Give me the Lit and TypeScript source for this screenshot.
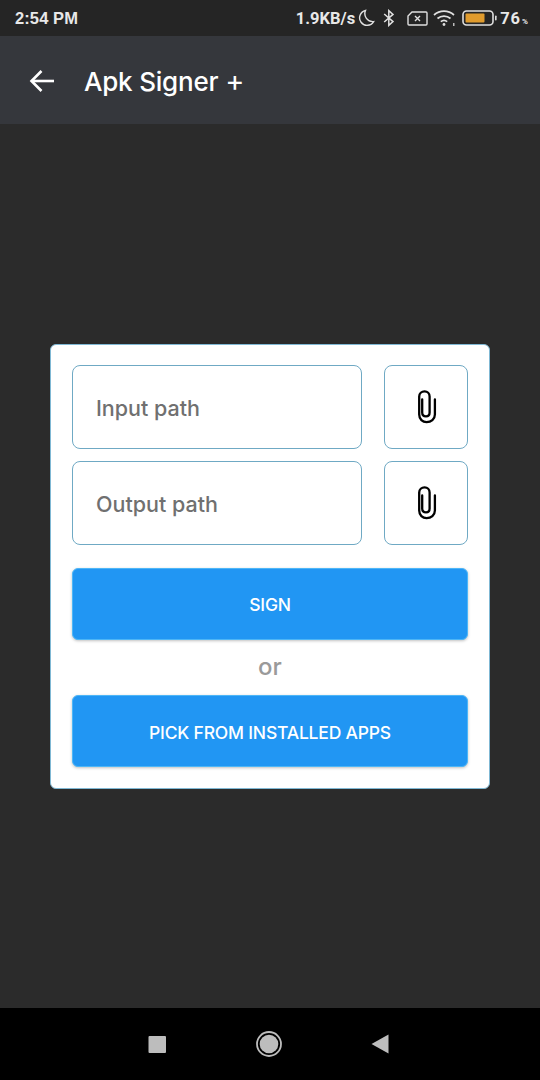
import { LitElement, html, css } from "lit";
import { customElement } from "lit/decorators.js";

const clip = html`<svg class="clip" width="22" height="34" viewBox="0 0 22 34" fill="none" stroke="#000" stroke-width="2.3" stroke-linecap="round" stroke-linejoin="round"><path d="M6.2 9.5 V22.5 C6.2 25 8 26.4 10 26.4 C12 26.4 13.6 25 13.6 22.5 V6.5 C13.6 3.4 11.4 1.4 8.6 1.4 C5.6 1.4 3.2 3.4 3.2 6.5 V24.6 C3.2 29.2 6.6 32.2 10.6 32.2 C15 32.2 18.9 29.4 18.9 24.6 V9.5"/></svg>`;

@customElement("app-root")
export class AppRoot extends LitElement {
  static styles = css`
    :host { display: flex; flex-direction: column; width: 540px; height: 1080px; background: #2b2b2b; font-family: Inter, "Noto Sans", sans-serif; overflow: hidden; }
    .status { height: 36px; flex: none; background: #252525; display: flex; align-items: center; justify-content: space-between; padding: 0 12px 0 15px; color: #e8e8e8; font-weight: 700; box-sizing: border-box; }
    .time { font-family: "Liberation Sans", sans-serif; font-size: 16.5px; letter-spacing: 0.1px; }
    .status-right { display: flex; align-items: center; font-family: Roboto, sans-serif; }
    .speed { font-size: 16.5px; margin-right: 3px; }
    .status-right svg { display: block; flex: none; }
    .moon { margin-right: 8px; }
    .bt { margin-right: 12px; }
    .sim { margin-right: 5px; }
    .wifi { margin-right: 5px; }
    .batt { margin-right: 3px; }
    .pct { font-size: 16.5px; letter-spacing: 1px; }
    .pct small { font-size: 8px; margin-left: 1px; letter-spacing: 0; }
    .bar { height: 88px; flex: none; background: #35373c; display: flex; align-items: center; padding: 0 0 0 29px; box-sizing: border-box; color: #fff; }
    .bar svg { display: block; margin: 1px 29px 0 0; }
    .title { font-size: 26px; font-weight: 500; letter-spacing: -0.2px; padding-top: 2px; }
    .plus { font-size: 29px; font-weight: 400; line-height: 1; }
    .main { flex: 1; display: flex; align-items: flex-start; justify-content: center; padding-top: 220px; box-sizing: border-box; }
    .card { width: 440px; height: 445px; background: #fff; border-radius: 6px; border: 1px solid #7fb8d4; box-sizing: border-box; padding: 20px 21px; display: flex; flex-direction: column; }
    .row { display: flex; justify-content: space-between; margin-bottom: 12px; }
    .field, .attach { height: 84px; box-sizing: border-box; border: 1px solid #6fa9c4; border-radius: 8px; background: #fff; display: flex; align-items: center; }
    .field { width: 290px; padding: 2px 0 0 23px; color: #707070; font-size: 21.5px; font-weight: 500; }
    .attach { width: 84px; justify-content: center; padding-left: 1px; }
    .btn { height: 72px; box-sizing: border-box; border: 1px solid #4db6f7; border-radius: 6px; background: #2196f3; color: #fff; font-size: 17.5px; font-weight: 500; letter-spacing: -0.2px; padding-top: 2px; display: flex; align-items: center; justify-content: center; box-shadow: 0 1px 3px rgba(0,0,0,.25); }
    .first { margin-top: 11px; padding-top: 0; }
    .or { height: 55px; display: flex; align-items: center; justify-content: center; color: #9a9a9a; font-size: 24px; font-weight: 500; padding-bottom: 2px; box-sizing: border-box; }
    .nav { height: 72px; flex: none; background: #000; display: flex; align-items: center; box-sizing: border-box; padding: 0 0 0 148px; }
    .nav svg { display: block; }
    .sq { margin-right: 89px; }
    .ci { margin-right: 89px; }
  `;

  render() {
    return html`
      <div class="status">
        <span class="time">2:54 PM</span>
        <div class="status-right">
          <span class="speed">1.9KB/s</span>
          <svg class="moon" width="17" height="18" viewBox="0 0 17 18" fill="none" stroke="#e0e0e0" stroke-width="1.4"><path d="M7.5 1.5 A7.5 7.5 0 1 0 15.6 12.6 A8 8 0 0 1 7.5 1.5 Z"/></svg>
          <svg class="bt" width="12" height="18" viewBox="0 0 12 18" fill="none" stroke="#e0e0e0" stroke-width="1.5"><path d="M1.2 5 L10 12.6 L5.8 16.4 V1.6 L10 5.4 L1.2 13"/></svg>
          <svg class="sim" width="21" height="15" viewBox="0 0 21 15" fill="none" stroke="#e0e0e0" stroke-width="1.4"><path d="M5 1 H19 A1 1 0 0 1 20 2 V13 A1 1 0 0 1 19 14 H2 A1 1 0 0 1 1 13 V5 Z"/><path d="M8 5 L13 10 M13 5 L8 10"/></svg>
          <svg class="wifi" width="24" height="18" viewBox="0 0 24 18" fill="none" stroke="#e0e0e0" stroke-width="1.7"><path d="M1 6 A15 15 0 0 1 21 6"/><path d="M4.5 9.5 A10 10 0 0 1 17.5 9.5"/><path d="M7.8 12.6 A5 5 0 0 1 14.2 12.6"/><circle cx="11" cy="15.5" r="1.4" fill="#e0e0e0" stroke="none"/><rect x="20" y="14" width="1.5" height="3" fill="#bbb" stroke="none"/></svg>
          <svg class="batt" width="35" height="16" viewBox="0 0 35 16"><rect x="1" y="1" width="30" height="14" rx="3.5" fill="none" stroke="#e0e0e0" stroke-width="1.6"/><rect x="3.5" y="3.5" width="19" height="9" rx="1" fill="#e09b2d"/><rect x="33" y="5.5" width="1.6" height="5" rx=".8" fill="#e0e0e0"/></svg>
          <span class="pct">76<small>%</small></span>
        </div>
      </div>
      <div class="bar">
        <svg width="26" height="24" viewBox="0 0 26 24" fill="none" stroke="#fff" stroke-width="2.6"><path d="M25 12 H3"/><path d="M12.5 2 L2.5 12 L12.5 22"/></svg>
        <span class="title">Apk Signer <span class="plus">+</span></span>
      </div>
      <div class="main">
        <div class="card">
          <div class="row"><div class="field">Input path</div><div class="attach">${clip}</div></div>
          <div class="row"><div class="field">Output path</div><div class="attach">${clip}</div></div>
          <div class="btn first">SIGN</div>
          <div class="or">or</div>
          <div class="btn">PICK FROM INSTALLED APPS</div>
        </div>
      </div>
      <div class="nav">
        <svg class="sq" width="19" height="19" viewBox="0 0 19 19"><rect x="0.5" y="1" width="17.5" height="17" rx="1" fill="#bdbdbd"/></svg>
        <svg class="ci" width="26" height="26" viewBox="0 0 26 26"><circle cx="13" cy="13" r="12" fill="none" stroke="#bdbdbd" stroke-width="1.8"/><circle cx="13" cy="13" r="9.3" fill="#bdbdbd"/></svg>
        <svg width="18" height="20" viewBox="0 0 18 20"><path d="M17.5 0.5 V19.5 L0.5 10 Z" fill="#bdbdbd"/></svg>
      </div>
    `;
  }
}
